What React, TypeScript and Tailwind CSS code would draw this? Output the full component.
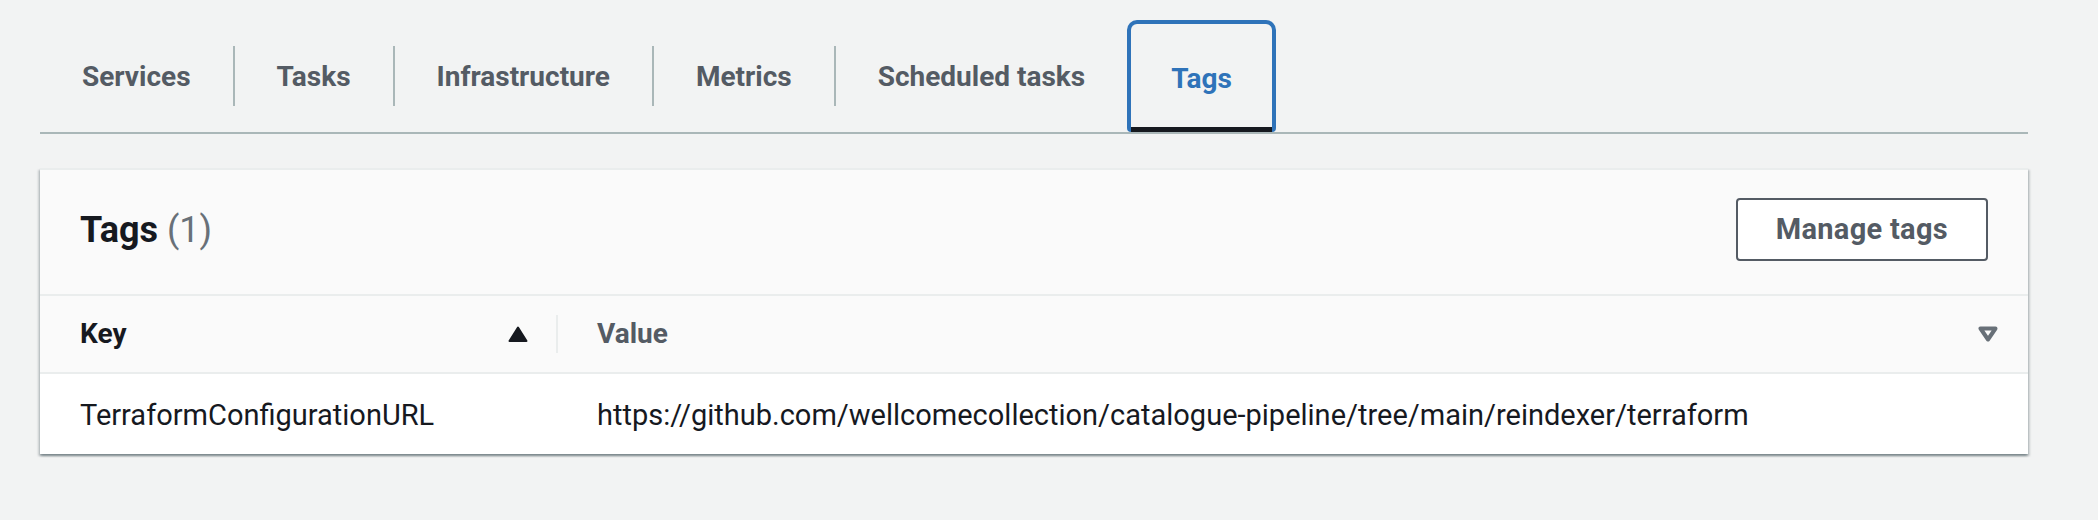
import React from 'react'

const tabs = ['Services', 'Tasks', 'Infrastructure', 'Metrics', 'Scheduled tasks']

function SortUp() {
  return (
    <svg width="20" height="16" viewBox="0 0 20 16">
      <polygon points="10,1.5 18.5,15 1.5,15" fill="#16191f" stroke="#16191f" strokeWidth="2" strokeLinejoin="round" />
    </svg>
  )
}

function SortDown() {
  return (
    <svg width="20" height="16" viewBox="0 0 20 16">
      <polygon points="2.5,2.5 17.5,2.5 10,13.5" fill="none" stroke="#687078" strokeWidth="4" strokeLinejoin="round" />
    </svg>
  )
}

function App() {
  return (
    <div
      className="w-full h-[520px] bg-[#f2f3f3] pt-[20px] pl-[40px] pr-[70px]"
      style={{ fontFamily: 'Roboto, "Liberation Sans", sans-serif' }}
    >
      {/* tab bar */}
      <div className="flex items-center h-[114px] border-b-2 border-[#aab7b8]">
        {tabs.map((t, i) => (
          <React.Fragment key={t}>
            <div className="h-[112px] flex items-center pt-[2px] px-[42px] text-[28px] font-bold text-[#545b64]">
              {t}
            </div>
            {i < tabs.length - 1 && <div className="w-[2px] h-[60px] bg-[#aab7b8]" />}
          </React.Fragment>
        ))}
        <div className="h-[112px] flex items-center pt-[2px] px-[40px] text-[28px] font-bold text-[#2f73b9] border-4 border-b-0 border-[#2f73b9] rounded-t-[10px] rounded-b-[4px] shadow-[inset_0_-5px_0_0_#16191f]">
          Tags
        </div>
      </div>

      {/* tags card */}
      <div className="mt-[34px] bg-white border-t-2 border-[#eaeded] shadow-[0_2px_2px_0_rgba(0,28,36,0.3),2px_2px_2px_0_rgba(0,28,36,0.15),-2px_2px_2px_0_rgba(0,28,36,0.15)]">
        <div className="flex items-center justify-between bg-[#fafafa] pl-[40px] pr-[40px] pt-[28px] pb-[33px] border-b-2 border-[#eaeded]">
          <h2 className="text-[36px] font-bold text-[#16191f] leading-[44px]">
            Tags <span className="font-normal text-[#687078]">(1)</span>
          </h2>
          <button className="h-[63px] px-[38px] bg-white border-2 border-[#545b64] rounded-[4px] text-[29px] font-bold text-[#545b64] tracking-[0.3px]">
            Manage tags
          </button>
        </div>

        <div className="flex items-center h-[78px] bg-[#fafafa] border-b-2 border-[#eaeded]">
          <div className="w-[516px] flex items-center justify-between pl-[40px] pr-[28px] text-[28px] font-bold text-[#16191f]">
            <span>Key</span>
            <SortUp />
          </div>
          <div className="w-[2px] h-[38px] bg-[#eaeded]" />
          <div className="flex-1 flex items-center justify-between pl-[39px] pr-[30px] text-[28px] font-bold text-[#545b64]">
            <span>Value</span>
            <SortDown />
          </div>
        </div>

        <div className="flex items-center h-[80px] pt-[4px] text-[29px] text-[#16191f]">
          <div className="w-[518px] pl-[40px]">TerraformConfigurationURL</div>
          <div className="flex-1 pl-[39px]">
            https://github.com/wellcomecollection/catalogue-pipeline/tree/main/reindexer/terraform
          </div>
        </div>
      </div>
    </div>
  )
}

export default App
